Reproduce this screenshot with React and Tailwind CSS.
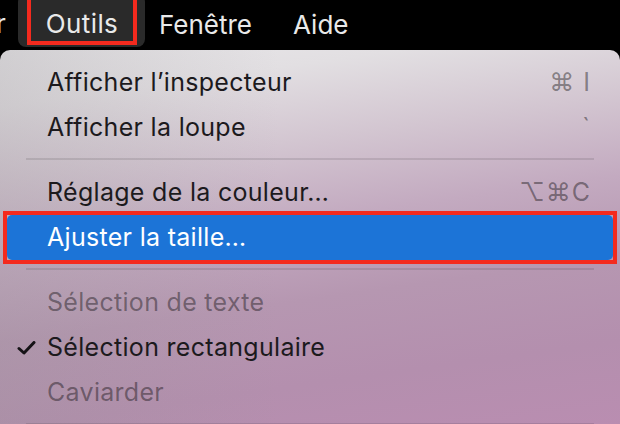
import React from "react";

function Row({ children, shortcut, disabled, check }) {
  return (
    <div className="mx-[7px] h-[45px] flex items-center">
      <div className="w-[40px] shrink-0 pl-[10px] flex items-center">
        {check && (
          <svg width="19" height="14" viewBox="0 0 19 14">
            <path d="M2 7.5 L7 12 L17 1.5" fill="none" stroke="#151316" strokeWidth="3" strokeLinecap="round" strokeLinejoin="round" />
          </svg>
        )}
      </div>
      <div className={"flex-1 " + (disabled ? "text-black/40" : "text-[#1c1a1d]")}>{children}</div>
      {shortcut && <div className="pr-[22px] text-black/40 tracking-[1px]">{shortcut}</div>}
    </div>
  );
}

function Sep() {
  return (
    <div className="pt-[8px] pb-[10px] px-[26px]">
      <div className="h-[2px] bg-black/10" />
    </div>
  );
}

export default function App() {
  return (
    <div
      className="w-[620px] h-[424px] overflow-hidden bg-black flex flex-col"
      style={{ fontFamily: "Inter, 'Noto Sans', sans-serif" }}
    >
      <div className="h-[50px] shrink-0 flex items-start overflow-hidden text-[26px] text-[#e9e9e9]">
        <div className="ml-[-4px] w-[14px] h-[47px] flex items-center overflow-hidden">r</div>
        <div className="ml-[8px] mt-[-6px] h-[53px] w-[127px] rounded-[8px] bg-[#2a2a2a] flex items-start">
          <div className="ml-[9px] w-[110px] h-[51px] border-[4px] border-[#f42a1e] flex items-center justify-center pt-[7px] tracking-[0.4px]">
            Outils
          </div>
        </div>
        <div className="ml-[14px] h-[47px] flex items-center pt-[1px]">Fenêtre</div>
        <div className="ml-[41px] h-[47px] flex items-center pt-[1px]">Aide</div>
      </div>
      <div className="flex-1 rounded-t-[10px] pt-[10px] text-[25px] tracking-[0.3px] bg-[linear-gradient(90deg,rgba(150,145,150,0.28)_0%,rgba(150,145,150,0)_45%),linear-gradient(172deg,#e8e7e9_0%,#e2dfe2_12%,#d3c6d1_28%,#c3aac0_45%,#b697b1_62%,#b48fae_80%,#ba8db1_100%)]">
        <Row shortcut="⌘ I">Afficher l’inspecteur</Row>
        <Row shortcut="`">Afficher la loupe</Row>
        <Sep />
        <Row shortcut="⌥⌘C">Réglage de la couleur…</Row>
        <div className="relative mx-[7px] h-[45px] rounded-[5px] bg-[#1c74d7] flex items-center pl-[40px] text-white">
          Ajuster la taille…
          <div className="absolute -inset-[4px] border-[4px] border-[#f42a1e]" />
        </div>
        <Sep />
        <Row disabled>Sélection de texte</Row>
        <Row check>Sélection rectangulaire</Row>
        <Row disabled>Caviarder</Row>
        <Sep />
      </div>
    </div>
  );
}
